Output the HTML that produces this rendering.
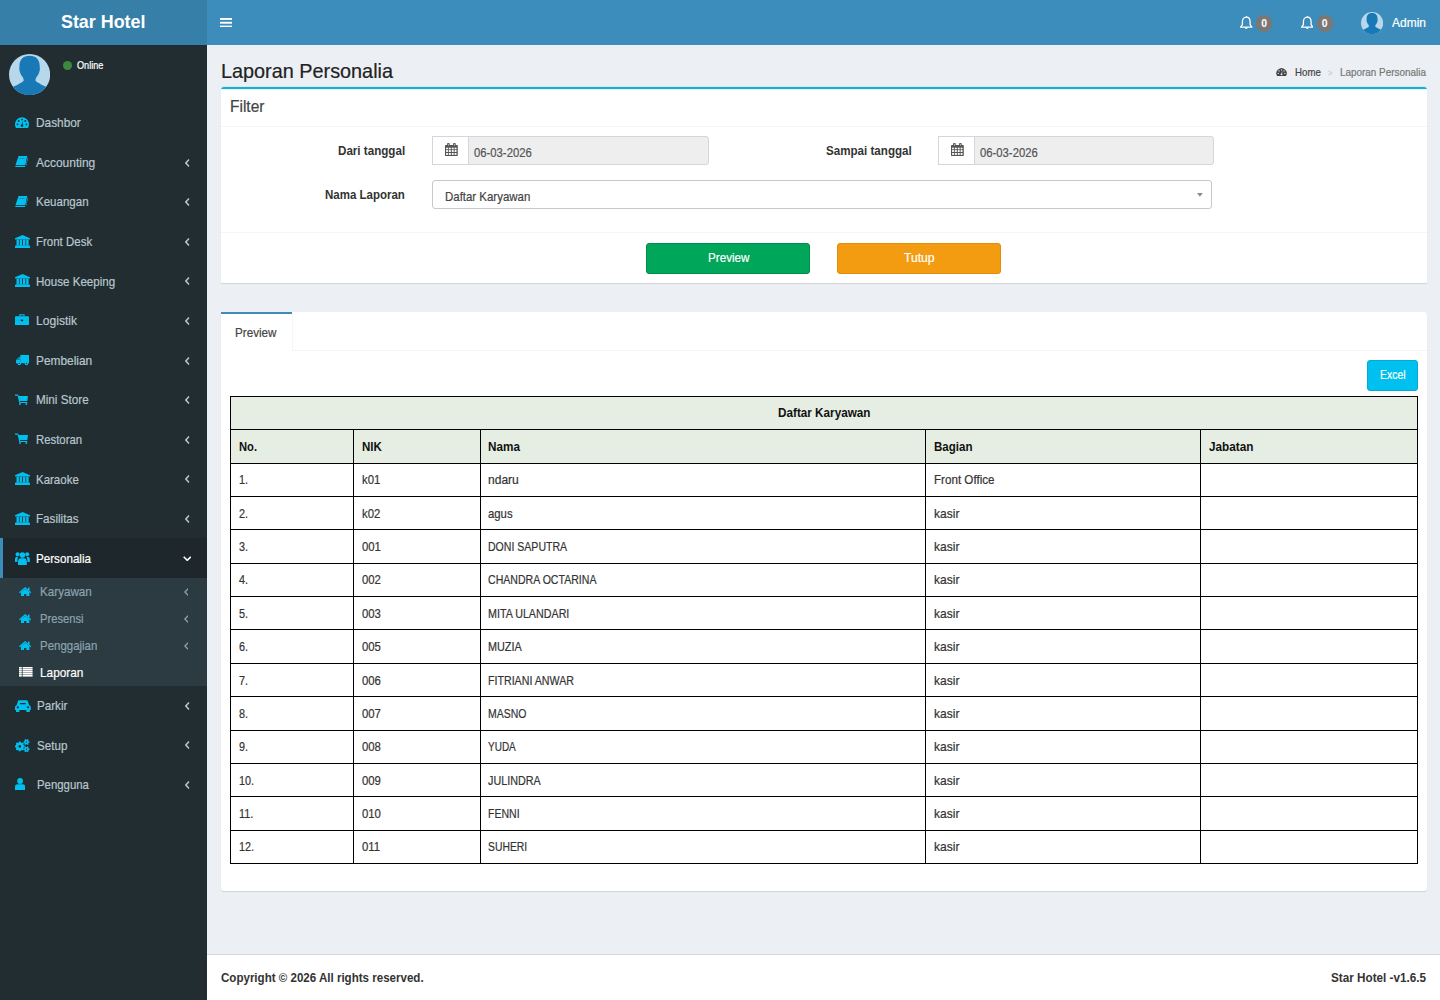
<!DOCTYPE html>
<html><head><meta charset="utf-8"><title>Laporan Personalia</title>
<style>
html,body{margin:0;padding:0;width:1440px;height:1000px;overflow:hidden;background:#ecf0f5;}
body{position:relative;font-family:"Liberation Sans",sans-serif;}
.r,.t,.i,.badge{position:absolute;}
.t{white-space:nowrap;line-height:1;transform-origin:0 0;-webkit-text-stroke:0.2px currentColor;}
.badge{width:16.2px;height:16.2px;border-radius:50%;background:#7a7774;}
.badge span{position:absolute;left:0;right:0;top:3.5px;text-align:center;font:bold 10.4px/1 "Liberation Sans",sans-serif;color:#fff;}
</style></head><body>
<div class="r" style="left:0px;top:0px;width:207px;height:45px;background:#367fa9;"></div>
<div class="r" style="left:207px;top:0px;width:1233px;height:45px;background:#3c8dbc;"></div>
<div class="t" style="left:61.30px;top:12.74px;font-size:18.84px;font-weight:bold;color:#fff;transform:scaleX(0.9492);-webkit-text-stroke:0;">Star Hotel</div>
<svg class="i" style="left:220px;top:17.5px;width:12px;height:9.5px;" viewBox="0 0 12 9.5"><rect x="0" y="0" width="12" height="1.9" fill="#fff"/><rect x="0" y="3.8" width="12" height="1.9" fill="#fff"/><rect x="0" y="7.6" width="12" height="1.9" fill="#fff"/></svg>
<svg class="i" style="left:1240.3px;top:15.8px;width:12.5px;height:13.3px;" viewBox="0 0 12.5 13.3"><path d="M6.25,1.2 C3.6,1.2 2.4,3.4 2.4,6 V8.6 L0.6,11.2 H11.9 L10.1,8.6 V6 C10.1,3.4 8.9,1.2 6.25,1.2Z" fill="none" stroke="#fff" stroke-width="1.3" stroke-linejoin="round"/><path d="M4.3,11.5 Q6.25,14.4 8.2,11.5Z" fill="#fff"/><rect x="5.8" y="0" width="0.9" height="1.5" fill="#fff"/></svg>
<div class="badge" style="left:1256px;top:15.4px;"><span>0</span></div>
<svg class="i" style="left:1300.7px;top:15.8px;width:12.5px;height:13.3px;" viewBox="0 0 12.5 13.3"><path d="M6.25,1.2 C3.6,1.2 2.4,3.4 2.4,6 V8.6 L0.6,11.2 H11.9 L10.1,8.6 V6 C10.1,3.4 8.9,1.2 6.25,1.2Z" fill="none" stroke="#fff" stroke-width="1.3" stroke-linejoin="round"/><path d="M4.3,11.5 Q6.25,14.4 8.2,11.5Z" fill="#fff"/><rect x="5.8" y="0" width="0.9" height="1.5" fill="#fff"/></svg>
<div class="badge" style="left:1316.6px;top:15.4px;"><span>0</span></div>
<svg class="i" style="left:1360.8px;top:11.6px;width:22.2px;height:22.2px;" viewBox="0 0 100 100"><defs><clipPath id="c1360_11"><circle cx="50" cy="50" r="50"/></clipPath></defs><circle cx="50" cy="50" r="50" fill="#b7d7ea"/><g clip-path="url(#c1360_11)"><path d="M50,4 C34,4 25.5,14 25.5,28 C25.5,33 24.5,36 25.5,40 C26.5,46 30,52 34,57 L36,64 C34,68 28,71 20,75 L4,82 L0,100 H100 L96,82 L80,75 C72,71 66,68 64,64 L66,57 C70,52 73.5,46 74.5,40 C75.5,36 74.5,33 74.5,28 C74.5,14 66,4 50,4Z" fill="#1879b6"/></g></svg>
<div class="t" style="left:1392.00px;top:16.93px;font-size:12.61px;font-weight:normal;color:#fff;transform:scaleX(0.9512);">Admin</div>
<div class="r" style="left:0px;top:45px;width:207px;height:955px;background:#222d32;"></div>
<svg class="i" style="left:8.8px;top:53.8px;width:41.2px;height:41.2px;" viewBox="0 0 100 100"><defs><clipPath id="c8_53"><circle cx="50" cy="50" r="50"/></clipPath></defs><circle cx="50" cy="50" r="50" fill="#b7d7ea"/><g clip-path="url(#c8_53)"><path d="M50,4 C34,4 25.5,14 25.5,28 C25.5,33 24.5,36 25.5,40 C26.5,46 30,52 34,57 L36,64 C34,68 28,71 20,75 L4,82 L0,100 H100 L96,82 L80,75 C72,71 66,68 64,64 L66,57 C70,52 73.5,46 74.5,40 C75.5,36 74.5,33 74.5,28 C74.5,14 66,4 50,4Z" fill="#1879b6"/></g></svg>
<div class="r" style="left:62.9px;top:60.9px;width:8.8px;height:8.8px;border-radius:50%;background:#3c883c"></div>
<div class="t" style="left:76.90px;top:61.00px;font-size:10.29px;font-weight:normal;color:#fff;transform:scaleX(0.8878);">Online</div>
<div class="t" style="left:36.20px;top:117.24px;font-size:12.60px;font-weight:normal;color:#b8c7ce;transform:scaleX(0.9406);">Dashbor</div>
<svg class="i" style="left:14.8px;top:117.0px;width:14px;height:11.25px;" viewBox="0 0 14 11.25"><path d="M1.2,11.25 A7,7 0 1,1 12.8,11.25 Z" fill="#00c0ef"/><circle cx="7" cy="2.6" r="0.9" fill="#222d32"/><circle cx="3.7" cy="4" r="0.9" fill="#222d32"/><circle cx="10.3" cy="4" r="0.9" fill="#222d32"/><circle cx="2.5" cy="7.3" r="0.9" fill="#222d32"/><circle cx="11.5" cy="7.3" r="0.9" fill="#222d32"/><circle cx="7" cy="8.6" r="1.3" fill="#222d32"/><path d="M6.6,8.5 L7.6,4.6 L8.2,4.8 L7.4,8.7Z" fill="#222d32"/></svg>
<div class="t" style="left:36.20px;top:156.84px;font-size:12.60px;font-weight:normal;color:#b8c7ce;transform:scaleX(0.9508);">Accounting</div>
<svg class="i" style="left:14.8px;top:156.0px;width:13px;height:11.4px;" viewBox="0 0 13 11.4"><path d="M3.6,0 H12.2 L10.3,9.3 H0.4 Z" fill="#00c0ef"/><path d="M0.3,9.9 H10.2 L9.9,11.4 H1.3 Q0.1,11.3 0.3,9.9 Z" fill="#00c0ef"/><path d="M12.5,1.6 H13 L11.4,9.6 H10.9 Z" fill="#00c0ef"/><rect x="5.2" y="1.9" width="5.4" height="1" fill="#1a8db3" transform="skewX(-20)"/></svg>
<svg class="i" style="left:185px;top:158.60000000000002px;width:4.6px;height:8px;" viewBox="0 0 4.6 8"><path d="M3.9999999999999996,0.6 L0.9,4.0 L3.9999999999999996,7.4" fill="none" stroke="#b8c7ce" stroke-width="1.5"/></svg>
<div class="t" style="left:36.20px;top:196.44px;font-size:12.60px;font-weight:normal;color:#b8c7ce;transform:scaleX(0.9155);">Keuangan</div>
<svg class="i" style="left:14.8px;top:195.6px;width:13px;height:11.4px;" viewBox="0 0 13 11.4"><path d="M3.6,0 H12.2 L10.3,9.3 H0.4 Z" fill="#00c0ef"/><path d="M0.3,9.9 H10.2 L9.9,11.4 H1.3 Q0.1,11.3 0.3,9.9 Z" fill="#00c0ef"/><path d="M12.5,1.6 H13 L11.4,9.6 H10.9 Z" fill="#00c0ef"/><rect x="5.2" y="1.9" width="5.4" height="1" fill="#1a8db3" transform="skewX(-20)"/></svg>
<svg class="i" style="left:185px;top:198.20000000000002px;width:4.6px;height:8px;" viewBox="0 0 4.6 8"><path d="M3.9999999999999996,0.6 L0.9,4.0 L3.9999999999999996,7.4" fill="none" stroke="#b8c7ce" stroke-width="1.5"/></svg>
<div class="t" style="left:36.20px;top:236.04px;font-size:12.60px;font-weight:normal;color:#b8c7ce;transform:scaleX(0.9112);">Front Desk</div>
<svg class="i" style="left:14.9px;top:234.6px;width:15.1px;height:13.2px;" viewBox="0 0 15.1 13.2"><path d="M7.55,0 L15.1,3.3 V4.6 H0 V3.3 Z" fill="#00c0ef"/><rect x="1.5" y="4.6" width="2.4" height="5.6" fill="#00c0ef"/><rect x="4.7" y="4.6" width="2.4" height="5.6" fill="#00c0ef"/><rect x="8" y="4.6" width="2.4" height="5.6" fill="#00c0ef"/><rect x="11.2" y="4.6" width="2.4" height="5.6" fill="#00c0ef"/><path d="M0.8,10.2 H14.3 L15.1,11.3 V13.2 H0 V11.3 Z" fill="#00c0ef"/></svg>
<svg class="i" style="left:185px;top:237.8px;width:4.6px;height:8px;" viewBox="0 0 4.6 8"><path d="M3.9999999999999996,0.6 L0.9,4.0 L3.9999999999999996,7.4" fill="none" stroke="#b8c7ce" stroke-width="1.5"/></svg>
<div class="t" style="left:36.20px;top:275.64px;font-size:12.60px;font-weight:normal;color:#b8c7ce;transform:scaleX(0.9190);">House Keeping</div>
<svg class="i" style="left:14.9px;top:274.20000000000005px;width:15.1px;height:13.2px;" viewBox="0 0 15.1 13.2"><path d="M7.55,0 L15.1,3.3 V4.6 H0 V3.3 Z" fill="#00c0ef"/><rect x="1.5" y="4.6" width="2.4" height="5.6" fill="#00c0ef"/><rect x="4.7" y="4.6" width="2.4" height="5.6" fill="#00c0ef"/><rect x="8" y="4.6" width="2.4" height="5.6" fill="#00c0ef"/><rect x="11.2" y="4.6" width="2.4" height="5.6" fill="#00c0ef"/><path d="M0.8,10.2 H14.3 L15.1,11.3 V13.2 H0 V11.3 Z" fill="#00c0ef"/></svg>
<svg class="i" style="left:185px;top:277.40000000000003px;width:4.6px;height:8px;" viewBox="0 0 4.6 8"><path d="M3.9999999999999996,0.6 L0.9,4.0 L3.9999999999999996,7.4" fill="none" stroke="#b8c7ce" stroke-width="1.5"/></svg>
<div class="t" style="left:36.20px;top:315.24px;font-size:12.60px;font-weight:normal;color:#b8c7ce;transform:scaleX(0.9608);">Logistik</div>
<svg class="i" style="left:14.9px;top:313.7px;width:14px;height:11.3px;" viewBox="0 0 14 11.3"><path d="M4.3,0.3 H9.6 V2.2 H8.4 V1.3 H5.5 V2.2 H4.3Z" fill="#00c0ef"/><rect x="0" y="2.2" width="14" height="9.1" rx="0.8" fill="#00c0ef"/><path d="M0,6.2 H14" stroke="#1a9cc4" stroke-width="0.6"/><rect x="5.8" y="5.6" width="2.4" height="1.6" rx="0.6" fill="#222d32"/></svg>
<svg class="i" style="left:185px;top:317.0px;width:4.6px;height:8px;" viewBox="0 0 4.6 8"><path d="M3.9999999999999996,0.6 L0.9,4.0 L3.9999999999999996,7.4" fill="none" stroke="#b8c7ce" stroke-width="1.5"/></svg>
<div class="t" style="left:36.20px;top:354.84px;font-size:12.60px;font-weight:normal;color:#b8c7ce;transform:scaleX(0.9440);">Pembelian</div>
<svg class="i" style="left:15.8px;top:355.40000000000003px;width:13.1px;height:10.3px;" viewBox="0 0 13.1 10.3"><rect x="4.3" y="0" width="8.8" height="8.2" fill="#00c0ef"/><path d="M0,5.2 L2.5,2.2 H4.5 V8.2 H0Z" fill="#00c0ef"/><path d="M1.8,3.6 H3.6 V4.6 H1.2Z" fill="#222d32"/><circle cx="3.3" cy="8.4" r="1.8" fill="#00c0ef"/><circle cx="10.5" cy="8.4" r="1.8" fill="#00c0ef"/><circle cx="3.3" cy="8.4" r="0.6" fill="#222d32"/><circle cx="10.5" cy="8.4" r="0.6" fill="#222d32"/></svg>
<svg class="i" style="left:185px;top:356.6px;width:4.6px;height:8px;" viewBox="0 0 4.6 8"><path d="M3.9999999999999996,0.6 L0.9,4.0 L3.9999999999999996,7.4" fill="none" stroke="#b8c7ce" stroke-width="1.5"/></svg>
<div class="t" style="left:36.20px;top:394.44px;font-size:12.60px;font-weight:normal;color:#b8c7ce;transform:scaleX(0.9295);">Mini Store</div>
<svg class="i" style="left:14.9px;top:393.79999999999995px;width:13px;height:11px;" viewBox="0 0 13 11"><path d="M0,0.6 H3 L3.8,2 H13 L12.3,7 H4.8 L5.2,8 H12.3 V9 H4.4 L2.6,1.8 H0Z" fill="#00c0ef"/><circle cx="5" cy="10" r="0.95" fill="#00c0ef"/><circle cx="11.3" cy="10" r="0.95" fill="#00c0ef"/></svg>
<svg class="i" style="left:185px;top:396.2px;width:4.6px;height:8px;" viewBox="0 0 4.6 8"><path d="M3.9999999999999996,0.6 L0.9,4.0 L3.9999999999999996,7.4" fill="none" stroke="#b8c7ce" stroke-width="1.5"/></svg>
<div class="t" style="left:36.20px;top:434.04px;font-size:12.60px;font-weight:normal;color:#b8c7ce;transform:scaleX(0.9012);">Restoran</div>
<svg class="i" style="left:14.9px;top:433.4px;width:13px;height:11px;" viewBox="0 0 13 11"><path d="M0,0.6 H3 L3.8,2 H13 L12.3,7 H4.8 L5.2,8 H12.3 V9 H4.4 L2.6,1.8 H0Z" fill="#00c0ef"/><circle cx="5" cy="10" r="0.95" fill="#00c0ef"/><circle cx="11.3" cy="10" r="0.95" fill="#00c0ef"/></svg>
<svg class="i" style="left:185px;top:435.8px;width:4.6px;height:8px;" viewBox="0 0 4.6 8"><path d="M3.9999999999999996,0.6 L0.9,4.0 L3.9999999999999996,7.4" fill="none" stroke="#b8c7ce" stroke-width="1.5"/></svg>
<div class="t" style="left:36.20px;top:473.64px;font-size:12.60px;font-weight:normal;color:#b8c7ce;transform:scaleX(0.9119);">Karaoke</div>
<svg class="i" style="left:14.9px;top:472.20000000000005px;width:15.1px;height:13.2px;" viewBox="0 0 15.1 13.2"><path d="M7.55,0 L15.1,3.3 V4.6 H0 V3.3 Z" fill="#00c0ef"/><rect x="1.5" y="4.6" width="2.4" height="5.6" fill="#00c0ef"/><rect x="4.7" y="4.6" width="2.4" height="5.6" fill="#00c0ef"/><rect x="8" y="4.6" width="2.4" height="5.6" fill="#00c0ef"/><rect x="11.2" y="4.6" width="2.4" height="5.6" fill="#00c0ef"/><path d="M0.8,10.2 H14.3 L15.1,11.3 V13.2 H0 V11.3 Z" fill="#00c0ef"/></svg>
<svg class="i" style="left:185px;top:475.40000000000003px;width:4.6px;height:8px;" viewBox="0 0 4.6 8"><path d="M3.9999999999999996,0.6 L0.9,4.0 L3.9999999999999996,7.4" fill="none" stroke="#b8c7ce" stroke-width="1.5"/></svg>
<div class="t" style="left:36.20px;top:513.24px;font-size:12.60px;font-weight:normal;color:#b8c7ce;transform:scaleX(0.9234);">Fasilitas</div>
<svg class="i" style="left:14.9px;top:511.80000000000007px;width:15.1px;height:13.2px;" viewBox="0 0 15.1 13.2"><path d="M7.55,0 L15.1,3.3 V4.6 H0 V3.3 Z" fill="#00c0ef"/><rect x="1.5" y="4.6" width="2.4" height="5.6" fill="#00c0ef"/><rect x="4.7" y="4.6" width="2.4" height="5.6" fill="#00c0ef"/><rect x="8" y="4.6" width="2.4" height="5.6" fill="#00c0ef"/><rect x="11.2" y="4.6" width="2.4" height="5.6" fill="#00c0ef"/><path d="M0.8,10.2 H14.3 L15.1,11.3 V13.2 H0 V11.3 Z" fill="#00c0ef"/></svg>
<svg class="i" style="left:185px;top:515.0px;width:4.6px;height:8px;" viewBox="0 0 4.6 8"><path d="M3.9999999999999996,0.6 L0.9,4.0 L3.9999999999999996,7.4" fill="none" stroke="#b8c7ce" stroke-width="1.5"/></svg>
<div class="r" style="left:0px;top:538px;width:207px;height:40px;background:#1e282c;"></div>
<div class="r" style="left:0px;top:538px;width:2.7px;height:40px;background:#3c8dbc;"></div>
<div class="t" style="left:36.20px;top:552.84px;font-size:12.60px;font-weight:normal;color:#fff;transform:scaleX(0.9245);">Personalia</div>
<svg class="i" style="left:15px;top:551.6px;width:14.8px;height:13.1px;" viewBox="0 0 14.8 13.1"><circle cx="7.4" cy="3" r="2.8" fill="#00c0ef"/><circle cx="2.6" cy="2.3" r="2" fill="#00c0ef"/><circle cx="12.2" cy="2.3" r="2" fill="#00c0ef"/><path d="M3,13.1 V9.6 Q3,6.6 5.6,6.3 H9.2 Q11.8,6.6 11.8,9.6 V13.1Z" fill="#00c0ef"/><path d="M0,10 V7 Q0,4.8 2,4.8 H3.4 Q2.4,6 2.4,8.8 V10Z" fill="#00c0ef"/><path d="M14.8,10 V7 Q14.8,4.8 12.8,4.8 H11.4 Q12.4,6 12.4,8.8 V10Z" fill="#00c0ef"/></svg>
<svg class="i" style="left:182.8px;top:555.5px;width:8.5px;height:5.1px;" viewBox="0 0 8.5 5.1"><path d="M0.7,0.7 L4.25,4.3 L7.8,0.7" fill="none" stroke="#fff" stroke-width="1.6"/></svg>
<div class="r" style="left:0px;top:578px;width:207px;height:108px;background:#2c3b41;"></div>
<div class="t" style="left:40.00px;top:586.04px;font-size:12.60px;font-weight:normal;color:#8aa4af;transform:scaleX(0.9249);">Karyawan</div>
<svg class="i" style="left:18.7px;top:586.5px;width:12.4px;height:9.8px;" viewBox="0 0 12.4 9.8"><path d="M6.2,0 L12.4,5.3 L11.5,6.2 L6.2,1.8 L0.9,6.2 L0,5.3Z" fill="#00c0ef"/><path d="M2,5.3 L6.2,1.9 L10.4,5.3 V9.8 H7.4 V6.9 H5 V9.8 H2Z" fill="#00c0ef"/><rect x="9" y="0.6" width="1.6" height="2.8" fill="#00c0ef"/></svg>
<svg class="i" style="left:183.7px;top:588px;width:4.7px;height:8px;" viewBox="0 0 4.7 8"><path d="M4.1000000000000005,0.6 L0.9,4.0 L4.1000000000000005,7.4" fill="none" stroke="#8aa4af" stroke-width="1.3"/></svg>
<div class="t" style="left:40.00px;top:613.04px;font-size:12.60px;font-weight:normal;color:#8aa4af;transform:scaleX(0.8895);">Presensi</div>
<svg class="i" style="left:18.7px;top:613.5px;width:12.4px;height:9.8px;" viewBox="0 0 12.4 9.8"><path d="M6.2,0 L12.4,5.3 L11.5,6.2 L6.2,1.8 L0.9,6.2 L0,5.3Z" fill="#00c0ef"/><path d="M2,5.3 L6.2,1.9 L10.4,5.3 V9.8 H7.4 V6.9 H5 V9.8 H2Z" fill="#00c0ef"/><rect x="9" y="0.6" width="1.6" height="2.8" fill="#00c0ef"/></svg>
<svg class="i" style="left:183.7px;top:615px;width:4.7px;height:8px;" viewBox="0 0 4.7 8"><path d="M4.1000000000000005,0.6 L0.9,4.0 L4.1000000000000005,7.4" fill="none" stroke="#8aa4af" stroke-width="1.3"/></svg>
<div class="t" style="left:40.00px;top:640.04px;font-size:12.60px;font-weight:normal;color:#8aa4af;transform:scaleX(0.9102);">Penggajian</div>
<svg class="i" style="left:18.7px;top:640.5px;width:12.4px;height:9.8px;" viewBox="0 0 12.4 9.8"><path d="M6.2,0 L12.4,5.3 L11.5,6.2 L6.2,1.8 L0.9,6.2 L0,5.3Z" fill="#00c0ef"/><path d="M2,5.3 L6.2,1.9 L10.4,5.3 V9.8 H7.4 V6.9 H5 V9.8 H2Z" fill="#00c0ef"/><rect x="9" y="0.6" width="1.6" height="2.8" fill="#00c0ef"/></svg>
<svg class="i" style="left:183.7px;top:642px;width:4.7px;height:8px;" viewBox="0 0 4.7 8"><path d="M4.1000000000000005,0.6 L0.9,4.0 L4.1000000000000005,7.4" fill="none" stroke="#8aa4af" stroke-width="1.3"/></svg>
<div class="t" style="left:40.00px;top:667.04px;font-size:12.60px;font-weight:normal;color:#fff;transform:scaleX(0.9385);">Laporan</div>
<svg class="i" style="left:19px;top:667.2px;width:13.6px;height:9.6px;" viewBox="0 0 13.6 9.6"><rect x="0" y="0" width="2.8" height="1.6" fill="#fff"/><rect x="3.6" y="0" width="10" height="1.6" fill="#fff"/><rect x="0" y="2" width="2.8" height="1.6" fill="#fff"/><rect x="3.6" y="2" width="10" height="1.6" fill="#fff"/><rect x="0" y="4" width="2.8" height="1.6" fill="#fff"/><rect x="3.6" y="4" width="10" height="1.6" fill="#fff"/><rect x="0" y="6" width="2.8" height="1.6" fill="#fff"/><rect x="3.6" y="6" width="10" height="1.6" fill="#fff"/><rect x="0" y="8" width="2.8" height="1.6" fill="#fff"/><rect x="3.6" y="8" width="10" height="1.6" fill="#fff"/></svg>
<div class="t" style="left:36.60px;top:700.04px;font-size:12.60px;font-weight:normal;color:#b8c7ce;transform:scaleX(0.9244);">Parkir</div>
<svg class="i" style="left:14.8px;top:699.5px;width:15.8px;height:12.4px;" viewBox="0 0 15.8 12.4"><path d="M3.3,0.3 H12.4 L14.2,5.2 Q15.8,5.6 15.8,7.5 V10 H0 V7.5 Q0,5.6 1.6,5.2Z" fill="#00c0ef"/><path d="M5,2.9 H10.6 L11,4.2 H4.7Z" fill="#222d32"/><circle cx="2.8" cy="7.3" r="1.1" fill="#222d32"/><circle cx="13" cy="7.3" r="1.1" fill="#222d32"/><rect x="1" y="9.5" width="3.4" height="2.9" rx="1" fill="#00c0ef"/><rect x="11.4" y="9.5" width="3.4" height="2.9" rx="1" fill="#00c0ef"/></svg>
<svg class="i" style="left:185px;top:701.8px;width:4.6px;height:8px;" viewBox="0 0 4.6 8"><path d="M3.9999999999999996,0.6 L0.9,4.0 L3.9999999999999996,7.4" fill="none" stroke="#b8c7ce" stroke-width="1.5"/></svg>
<div class="t" style="left:36.60px;top:739.64px;font-size:12.60px;font-weight:normal;color:#b8c7ce;transform:scaleX(0.9226);">Setup</div>
<svg class="i" style="left:14.9px;top:738.7px;width:15px;height:13px;" viewBox="0 0 15 13"><circle cx="4.8" cy="7.4" r="3.9" fill="#00c0ef"/><rect x="7.75" y="6.45" width="1.9" height="1.9" fill="#00c0ef" transform="rotate(0.0 8.70 7.40)"/><rect x="6.61" y="9.21" width="1.9" height="1.9" fill="#00c0ef" transform="rotate(45.0 7.56 10.16)"/><rect x="3.85" y="10.35" width="1.9" height="1.9" fill="#00c0ef" transform="rotate(90.0 4.80 11.30)"/><rect x="1.09" y="9.21" width="1.9" height="1.9" fill="#00c0ef" transform="rotate(135.0 2.04 10.16)"/><rect x="-0.05" y="6.45" width="1.9" height="1.9" fill="#00c0ef" transform="rotate(180.0 0.90 7.40)"/><rect x="1.09" y="3.69" width="1.9" height="1.9" fill="#00c0ef" transform="rotate(225.0 2.04 4.64)"/><rect x="3.85" y="2.55" width="1.9" height="1.9" fill="#00c0ef" transform="rotate(270.0 4.80 3.50)"/><rect x="6.61" y="3.69" width="1.9" height="1.9" fill="#00c0ef" transform="rotate(315.0 7.56 4.64)"/><circle cx="4.8" cy="7.4" r="1.3" fill="#222d32"/><circle cx="11.5" cy="3" r="2.3" fill="#00c0ef"/><rect x="13.10" y="2.30" width="1.4" height="1.4" fill="#00c0ef" transform="rotate(0.0 13.80 3.00)"/><rect x="11.95" y="4.29" width="1.4" height="1.4" fill="#00c0ef" transform="rotate(60.0 12.65 4.99)"/><rect x="9.65" y="4.29" width="1.4" height="1.4" fill="#00c0ef" transform="rotate(120.0 10.35 4.99)"/><rect x="8.50" y="2.30" width="1.4" height="1.4" fill="#00c0ef" transform="rotate(180.0 9.20 3.00)"/><rect x="9.65" y="0.31" width="1.4" height="1.4" fill="#00c0ef" transform="rotate(240.0 10.35 1.01)"/><rect x="11.95" y="0.31" width="1.4" height="1.4" fill="#00c0ef" transform="rotate(300.0 12.65 1.01)"/><circle cx="11.5" cy="3" r="0.7" fill="#222d32"/><circle cx="11.5" cy="10.3" r="2.3" fill="#00c0ef"/><rect x="13.10" y="9.60" width="1.4" height="1.4" fill="#00c0ef" transform="rotate(0.0 13.80 10.30)"/><rect x="11.95" y="11.59" width="1.4" height="1.4" fill="#00c0ef" transform="rotate(60.0 12.65 12.29)"/><rect x="9.65" y="11.59" width="1.4" height="1.4" fill="#00c0ef" transform="rotate(120.0 10.35 12.29)"/><rect x="8.50" y="9.60" width="1.4" height="1.4" fill="#00c0ef" transform="rotate(180.0 9.20 10.30)"/><rect x="9.65" y="7.61" width="1.4" height="1.4" fill="#00c0ef" transform="rotate(240.0 10.35 8.31)"/><rect x="11.95" y="7.61" width="1.4" height="1.4" fill="#00c0ef" transform="rotate(300.0 12.65 8.31)"/><circle cx="11.5" cy="10.3" r="0.7" fill="#222d32"/></svg>
<svg class="i" style="left:185px;top:741.4px;width:4.6px;height:8px;" viewBox="0 0 4.6 8"><path d="M3.9999999999999996,0.6 L0.9,4.0 L3.9999999999999996,7.4" fill="none" stroke="#b8c7ce" stroke-width="1.5"/></svg>
<div class="t" style="left:36.60px;top:779.24px;font-size:12.60px;font-weight:normal;color:#b8c7ce;transform:scaleX(0.9040);">Pengguna</div>
<svg class="i" style="left:14.8px;top:778.1px;width:10.2px;height:11.9px;" viewBox="0 0 10.2 11.9"><circle cx="5.1" cy="3" r="2.9" fill="#00c0ef"/><path d="M0,11.9 V9 Q0,6.3 2.6,6.3 H7.6 Q10.2,6.3 10.2,9 V11.9Z" fill="#00c0ef"/></svg>
<svg class="i" style="left:185px;top:781.0px;width:4.6px;height:8px;" viewBox="0 0 4.6 8"><path d="M3.9999999999999996,0.6 L0.9,4.0 L3.9999999999999996,7.4" fill="none" stroke="#b8c7ce" stroke-width="1.5"/></svg>
<div class="r" style="left:207px;top:45px;width:1233px;height:909px;background:#ecf0f5;"></div>
<div class="t" style="left:221.30px;top:61.43px;font-size:20.14px;font-weight:normal;color:#222;transform:scaleX(0.9854);">Laporan Personalia</div>
<svg class="i" style="left:1276.1px;top:68.1px;width:11.1px;height:8.3px;" viewBox="0 0 14 11.25"><path d="M1.2,11.25 A7,7 0 1,1 12.8,11.25 Z" fill="#444"/><circle cx="7" cy="2.6" r="0.9" fill="#ecf0f5"/><circle cx="3.7" cy="4" r="0.9" fill="#ecf0f5"/><circle cx="10.3" cy="4" r="0.9" fill="#ecf0f5"/><circle cx="2.5" cy="7.3" r="0.9" fill="#ecf0f5"/><circle cx="11.5" cy="7.3" r="0.9" fill="#ecf0f5"/><circle cx="7" cy="8.6" r="1.3" fill="#ecf0f5"/><path d="M6.6,8.5 L7.6,4.6 L8.2,4.8 L7.4,8.7Z" fill="#ecf0f5"/></svg>
<div class="t" style="left:1294.70px;top:68.03px;font-size:10.14px;font-weight:normal;color:#444;transform:scaleX(0.9562);">Home</div>
<div class="t" style="left:1328.30px;top:68.86px;font-size:8.70px;font-weight:normal;color:#ccc;transform:scaleX(0.8846);">&gt;</div>
<div class="t" style="left:1340.00px;top:68.03px;font-size:10.14px;font-weight:normal;color:#777;transform:scaleX(0.9783);">Laporan Personalia</div>
<div class="r" style="left:221px;top:87px;width:1206px;height:194px;background:#fff;border-top:2px solid #32a4c3;border-radius:3px 3px 0 0;box-shadow:0 1px 1px rgba(0,0,0,0.12)"></div>
<div class="r" style="left:222px;top:86px;width:1204px;height:1px;background:#b4fbff;"></div>
<div class="r" style="left:221px;top:89px;width:1206px;height:1px;background:#d2fdff;"></div>
<div class="t" style="left:230.30px;top:99.25px;font-size:15.65px;font-weight:normal;color:#444;transform:scaleX(0.9900);">Filter</div>
<div class="r" style="left:221px;top:126px;width:1206px;height:1px;background:#f4f4f4;"></div>
<div class="t" style="left:337.80px;top:144.86px;font-size:12.46px;font-weight:bold;color:#333;transform:scaleX(0.9328);-webkit-text-stroke:0;">Dari tanggal</div>
<div class="t" style="left:825.80px;top:144.86px;font-size:12.46px;font-weight:bold;color:#333;transform:scaleX(0.9315);-webkit-text-stroke:0;">Sampai tanggal</div>
<div class="t" style="left:325.00px;top:189.30px;font-size:12.17px;font-weight:bold;color:#333;transform:scaleX(0.9462);-webkit-text-stroke:0;">Nama Laporan</div>
<div class="r" style="left:432.2px;top:136.3px;width:276.50000000000006px;height:29.2px;box-sizing:border-box;border:1px solid #d2d6de;border-radius:0 3px 3px 0;background:#eee"></div>
<div class="r" style="left:432.2px;top:136.3px;width:37.2px;height:29.2px;box-sizing:border-box;border:1px solid #d2d6de;background:#fff"></div>
<svg class="i" style="left:445.0px;top:142.9px;width:12.8px;height:12.9px;" viewBox="0 0 12.8 12.9"><rect x="0" y="1.9" width="12.8" height="11" rx="0.6" fill="#555"/><rect x="1.1" y="4.7" width="1.80" height="1.60" fill="#fff"/><rect x="1.1" y="7.1" width="1.80" height="1.90" fill="#fff"/><rect x="1.1" y="10.0" width="1.80" height="1.90" fill="#fff"/><rect x="3.8" y="4.7" width="2.00" height="1.60" fill="#fff"/><rect x="3.8" y="7.1" width="2.00" height="1.90" fill="#fff"/><rect x="3.8" y="10.0" width="2.00" height="1.90" fill="#fff"/><rect x="6.8" y="4.7" width="1.90" height="1.60" fill="#fff"/><rect x="6.8" y="7.1" width="1.90" height="1.90" fill="#fff"/><rect x="6.8" y="10.0" width="1.90" height="1.90" fill="#fff"/><rect x="9.6" y="4.7" width="1.90" height="1.60" fill="#fff"/><rect x="9.6" y="7.1" width="1.90" height="1.90" fill="#fff"/><rect x="9.6" y="10.0" width="1.90" height="1.90" fill="#fff"/><rect x="2.1" y="0" width="2.6" height="3.4" rx="0.8" fill="#555"/><rect x="8.1" y="0" width="2.6" height="3.4" rx="0.8" fill="#555"/><rect x="3.1" y="0.9" width="0.6" height="1.8" fill="#ddd"/><rect x="9.1" y="0.9" width="0.6" height="1.8" fill="#ddd"/></svg>
<div class="t" style="left:473.50px;top:146.58px;font-size:12.20px;font-weight:normal;color:#555;transform:scaleX(0.9262);">06-03-2026</div>
<div class="r" style="left:938.3px;top:136.3px;width:276.20000000000005px;height:29.2px;box-sizing:border-box;border:1px solid #d2d6de;border-radius:0 3px 3px 0;background:#eee"></div>
<div class="r" style="left:938.3px;top:136.3px;width:37.2px;height:29.2px;box-sizing:border-box;border:1px solid #d2d6de;background:#fff"></div>
<svg class="i" style="left:951.0999999999999px;top:142.9px;width:12.8px;height:12.9px;" viewBox="0 0 12.8 12.9"><rect x="0" y="1.9" width="12.8" height="11" rx="0.6" fill="#555"/><rect x="1.1" y="4.7" width="1.80" height="1.60" fill="#fff"/><rect x="1.1" y="7.1" width="1.80" height="1.90" fill="#fff"/><rect x="1.1" y="10.0" width="1.80" height="1.90" fill="#fff"/><rect x="3.8" y="4.7" width="2.00" height="1.60" fill="#fff"/><rect x="3.8" y="7.1" width="2.00" height="1.90" fill="#fff"/><rect x="3.8" y="10.0" width="2.00" height="1.90" fill="#fff"/><rect x="6.8" y="4.7" width="1.90" height="1.60" fill="#fff"/><rect x="6.8" y="7.1" width="1.90" height="1.90" fill="#fff"/><rect x="6.8" y="10.0" width="1.90" height="1.90" fill="#fff"/><rect x="9.6" y="4.7" width="1.90" height="1.60" fill="#fff"/><rect x="9.6" y="7.1" width="1.90" height="1.90" fill="#fff"/><rect x="9.6" y="10.0" width="1.90" height="1.90" fill="#fff"/><rect x="2.1" y="0" width="2.6" height="3.4" rx="0.8" fill="#555"/><rect x="8.1" y="0" width="2.6" height="3.4" rx="0.8" fill="#555"/><rect x="3.1" y="0.9" width="0.6" height="1.8" fill="#ddd"/><rect x="9.1" y="0.9" width="0.6" height="1.8" fill="#ddd"/></svg>
<div class="t" style="left:979.60px;top:146.58px;font-size:12.20px;font-weight:normal;color:#555;transform:scaleX(0.9262);">06-03-2026</div>
<div class="r" style="left:432.2px;top:180.3px;width:779.4px;height:29.2px;box-sizing:border-box;border:1px solid #c8c8c8;border-radius:3px;background:#fff"></div>
<div class="t" style="left:445.00px;top:190.53px;font-size:12.03px;font-weight:normal;color:#444;transform:scaleX(0.9530);">Daftar Karyawan</div>
<svg class="i" style="left:1197px;top:193px;width:5.8px;height:3.8px" viewBox="0 0 6 4"><path d="M0,0 H6 L3,4Z" fill="#888"/></svg>
<div class="r" style="left:221px;top:232px;width:1206px;height:1px;background:#f4f4f4;"></div>
<div class="r" style="left:646.3px;top:243px;width:163.4px;height:30.7px;box-sizing:border-box;background:#00a65a;border:1px solid #008d4c;border-radius:3px"></div>
<div class="t" style="left:707.70px;top:251.81px;font-size:12.75px;font-weight:normal;color:#fff;transform:scaleX(0.9140);">Preview</div>
<div class="r" style="left:837.3px;top:243px;width:163.4px;height:30.7px;box-sizing:border-box;background:#f39c12;border:1px solid #e08e0b;border-radius:3px"></div>
<div class="t" style="left:904.30px;top:251.81px;font-size:12.75px;font-weight:normal;color:#fff;transform:scaleX(0.9521);">Tutup</div>
<div class="r" style="left:221px;top:312px;width:1206px;height:579px;background:#fff;border-radius:3px;box-shadow:0 1px 1px rgba(0,0,0,0.12)"></div>
<div class="r" style="left:221px;top:312px;width:71px;height:2.3px;background:#3c8dbc;"></div>
<div class="r" style="left:292px;top:350px;width:1135px;height:1px;background:#f4f4f4;"></div>
<div class="r" style="left:292px;top:314px;width:1px;height:36px;background:#f6f6f6;"></div>
<div class="t" style="left:235.40px;top:326.61px;font-size:12.75px;font-weight:normal;color:#444;transform:scaleX(0.9162);">Preview</div>
<div class="r" style="left:1367px;top:360px;width:50.8px;height:30.8px;background:#00c0ef;border-radius:3px;box-sizing:border-box;border:1px solid #00acd6"></div>
<div class="t" style="left:1380.00px;top:368.78px;font-size:12.32px;font-weight:normal;color:#fff;transform:scaleX(0.8466);">Excel</div>
<div class="r" style="left:231px;top:397px;width:1186px;height:66px;background:#e6eee3;"></div>
<div class="r" style="left:230px;top:396px;width:1188px;height:1px;background:#000;"></div>
<div class="r" style="left:230px;top:429px;width:1188px;height:1px;background:#000;"></div>
<div class="r" style="left:230px;top:463px;width:1188px;height:1px;background:#000;"></div>
<div class="r" style="left:230px;top:496px;width:1188px;height:1px;background:#000;"></div>
<div class="r" style="left:230px;top:529px;width:1188px;height:1px;background:#000;"></div>
<div class="r" style="left:230px;top:563px;width:1188px;height:1px;background:#000;"></div>
<div class="r" style="left:230px;top:596px;width:1188px;height:1px;background:#000;"></div>
<div class="r" style="left:230px;top:629px;width:1188px;height:1px;background:#000;"></div>
<div class="r" style="left:230px;top:663px;width:1188px;height:1px;background:#000;"></div>
<div class="r" style="left:230px;top:696px;width:1188px;height:1px;background:#000;"></div>
<div class="r" style="left:230px;top:730px;width:1188px;height:1px;background:#000;"></div>
<div class="r" style="left:230px;top:763px;width:1188px;height:1px;background:#000;"></div>
<div class="r" style="left:230px;top:796px;width:1188px;height:1px;background:#000;"></div>
<div class="r" style="left:230px;top:830px;width:1188px;height:1px;background:#000;"></div>
<div class="r" style="left:230px;top:863px;width:1188px;height:1px;background:#000;"></div>
<div class="r" style="left:230px;top:396px;width:1px;height:468px;background:#000;"></div>
<div class="r" style="left:1417px;top:396px;width:1px;height:468px;background:#000;"></div>
<div class="r" style="left:353px;top:429px;width:1px;height:435px;background:#000;"></div>
<div class="r" style="left:480px;top:429px;width:1px;height:435px;background:#000;"></div>
<div class="r" style="left:925px;top:429px;width:1px;height:435px;background:#000;"></div>
<div class="r" style="left:1200px;top:429px;width:1px;height:435px;background:#000;"></div>
<div class="t" style="left:777.60px;top:406.79px;font-size:12.90px;font-weight:bold;color:#111;transform:scaleX(0.9089);-webkit-text-stroke:0;">Daftar Karyawan</div>
<div class="t" style="left:238.50px;top:440.26px;font-size:13.04px;font-weight:bold;color:#111;transform:scaleX(0.8571);-webkit-text-stroke:0;">No.</div>
<div class="t" style="left:361.90px;top:440.26px;font-size:13.04px;font-weight:bold;color:#111;transform:scaleX(0.8826);-webkit-text-stroke:0;">NIK</div>
<div class="t" style="left:488.40px;top:440.26px;font-size:13.04px;font-weight:bold;color:#111;transform:scaleX(0.8998);-webkit-text-stroke:0;">Nama</div>
<div class="t" style="left:933.50px;top:440.26px;font-size:13.04px;font-weight:bold;color:#111;transform:scaleX(0.8851);-webkit-text-stroke:0;">Bagian</div>
<div class="t" style="left:1208.50px;top:440.26px;font-size:13.04px;font-weight:bold;color:#111;transform:scaleX(0.9026);-webkit-text-stroke:0;">Jabatan</div>
<div class="t" style="left:238.50px;top:474.44px;font-size:12.60px;font-weight:normal;color:#333;transform:scaleX(0.8600);">1.</div>
<div class="t" style="left:361.90px;top:474.44px;font-size:12.60px;font-weight:normal;color:#333;transform:scaleX(0.9000);">k01</div>
<div class="t" style="left:488.40px;top:474.44px;font-size:12.60px;font-weight:normal;color:#333;transform:scaleX(0.9549);">ndaru</div>
<div class="t" style="left:933.50px;top:474.44px;font-size:12.60px;font-weight:normal;color:#333;transform:scaleX(0.9225);">Front Office</div>
<div class="t" style="left:238.50px;top:507.79px;font-size:12.60px;font-weight:normal;color:#333;transform:scaleX(0.8600);">2.</div>
<div class="t" style="left:361.90px;top:507.79px;font-size:12.60px;font-weight:normal;color:#333;transform:scaleX(0.9000);">k02</div>
<div class="t" style="left:488.40px;top:507.79px;font-size:12.60px;font-weight:normal;color:#333;transform:scaleX(0.8997);">agus</div>
<div class="t" style="left:933.50px;top:507.79px;font-size:12.60px;font-weight:normal;color:#333;transform:scaleX(0.9554);">kasir</div>
<div class="t" style="left:238.50px;top:541.14px;font-size:12.60px;font-weight:normal;color:#333;transform:scaleX(0.8600);">3.</div>
<div class="t" style="left:361.90px;top:541.14px;font-size:12.60px;font-weight:normal;color:#333;transform:scaleX(0.9000);">001</div>
<div class="t" style="left:488.40px;top:541.14px;font-size:12.60px;font-weight:normal;color:#333;transform:scaleX(0.8375);">DONI SAPUTRA</div>
<div class="t" style="left:933.50px;top:541.14px;font-size:12.60px;font-weight:normal;color:#333;transform:scaleX(0.9554);">kasir</div>
<div class="t" style="left:238.50px;top:574.49px;font-size:12.60px;font-weight:normal;color:#333;transform:scaleX(0.8600);">4.</div>
<div class="t" style="left:361.90px;top:574.49px;font-size:12.60px;font-weight:normal;color:#333;transform:scaleX(0.9000);">002</div>
<div class="t" style="left:488.40px;top:574.49px;font-size:12.60px;font-weight:normal;color:#333;transform:scaleX(0.8397);">CHANDRA OCTARINA</div>
<div class="t" style="left:933.50px;top:574.49px;font-size:12.60px;font-weight:normal;color:#333;transform:scaleX(0.9554);">kasir</div>
<div class="t" style="left:238.50px;top:607.84px;font-size:12.60px;font-weight:normal;color:#333;transform:scaleX(0.8600);">5.</div>
<div class="t" style="left:361.90px;top:607.84px;font-size:12.60px;font-weight:normal;color:#333;transform:scaleX(0.9000);">003</div>
<div class="t" style="left:488.40px;top:607.84px;font-size:12.60px;font-weight:normal;color:#333;transform:scaleX(0.8506);">MITA ULANDARI</div>
<div class="t" style="left:933.50px;top:607.84px;font-size:12.60px;font-weight:normal;color:#333;transform:scaleX(0.9554);">kasir</div>
<div class="t" style="left:238.50px;top:641.19px;font-size:12.60px;font-weight:normal;color:#333;transform:scaleX(0.8600);">6.</div>
<div class="t" style="left:361.90px;top:641.19px;font-size:12.60px;font-weight:normal;color:#333;transform:scaleX(0.9000);">005</div>
<div class="t" style="left:488.40px;top:641.19px;font-size:12.60px;font-weight:normal;color:#333;transform:scaleX(0.8612);">MUZIA</div>
<div class="t" style="left:933.50px;top:641.19px;font-size:12.60px;font-weight:normal;color:#333;transform:scaleX(0.9554);">kasir</div>
<div class="t" style="left:238.50px;top:674.54px;font-size:12.60px;font-weight:normal;color:#333;transform:scaleX(0.8600);">7.</div>
<div class="t" style="left:361.90px;top:674.54px;font-size:12.60px;font-weight:normal;color:#333;transform:scaleX(0.9000);">006</div>
<div class="t" style="left:488.40px;top:674.54px;font-size:12.60px;font-weight:normal;color:#333;transform:scaleX(0.8453);">FITRIANI ANWAR</div>
<div class="t" style="left:933.50px;top:674.54px;font-size:12.60px;font-weight:normal;color:#333;transform:scaleX(0.9554);">kasir</div>
<div class="t" style="left:238.50px;top:707.89px;font-size:12.60px;font-weight:normal;color:#333;transform:scaleX(0.8600);">8.</div>
<div class="t" style="left:361.90px;top:707.89px;font-size:12.60px;font-weight:normal;color:#333;transform:scaleX(0.9000);">007</div>
<div class="t" style="left:488.40px;top:707.89px;font-size:12.60px;font-weight:normal;color:#333;transform:scaleX(0.8315);">MASNO</div>
<div class="t" style="left:933.50px;top:707.89px;font-size:12.60px;font-weight:normal;color:#333;transform:scaleX(0.9554);">kasir</div>
<div class="t" style="left:238.50px;top:741.24px;font-size:12.60px;font-weight:normal;color:#333;transform:scaleX(0.8600);">9.</div>
<div class="t" style="left:361.90px;top:741.24px;font-size:12.60px;font-weight:normal;color:#333;transform:scaleX(0.9000);">008</div>
<div class="t" style="left:488.40px;top:741.24px;font-size:12.60px;font-weight:normal;color:#333;transform:scaleX(0.7937);">YUDA</div>
<div class="t" style="left:933.50px;top:741.24px;font-size:12.60px;font-weight:normal;color:#333;transform:scaleX(0.9554);">kasir</div>
<div class="t" style="left:238.50px;top:774.59px;font-size:12.60px;font-weight:normal;color:#333;transform:scaleX(0.8600);">10.</div>
<div class="t" style="left:361.90px;top:774.59px;font-size:12.60px;font-weight:normal;color:#333;transform:scaleX(0.9000);">009</div>
<div class="t" style="left:488.40px;top:774.59px;font-size:12.60px;font-weight:normal;color:#333;transform:scaleX(0.8561);">JULINDRA</div>
<div class="t" style="left:933.50px;top:774.59px;font-size:12.60px;font-weight:normal;color:#333;transform:scaleX(0.9554);">kasir</div>
<div class="t" style="left:238.50px;top:807.94px;font-size:12.60px;font-weight:normal;color:#333;transform:scaleX(0.8600);">11.</div>
<div class="t" style="left:361.90px;top:807.94px;font-size:12.60px;font-weight:normal;color:#333;transform:scaleX(0.9000);">010</div>
<div class="t" style="left:488.40px;top:807.94px;font-size:12.60px;font-weight:normal;color:#333;transform:scaleX(0.8360);">FENNI</div>
<div class="t" style="left:933.50px;top:807.94px;font-size:12.60px;font-weight:normal;color:#333;transform:scaleX(0.9554);">kasir</div>
<div class="t" style="left:238.50px;top:841.29px;font-size:12.60px;font-weight:normal;color:#333;transform:scaleX(0.8600);">12.</div>
<div class="t" style="left:361.90px;top:841.29px;font-size:12.60px;font-weight:normal;color:#333;transform:scaleX(0.9000);">011</div>
<div class="t" style="left:488.40px;top:841.29px;font-size:12.60px;font-weight:normal;color:#333;transform:scaleX(0.8230);">SUHERI</div>
<div class="t" style="left:933.50px;top:841.29px;font-size:12.60px;font-weight:normal;color:#333;transform:scaleX(0.9554);">kasir</div>
<div class="r" style="left:207px;top:954px;width:1233px;height:46px;background:#fff;"></div>
<div class="r" style="left:207px;top:954px;width:1233px;height:1px;background:#d2d6de;"></div>
<div class="t" style="left:220.80px;top:972.10px;font-size:12.17px;font-weight:bold;color:#333;transform:scaleX(0.9502);-webkit-text-stroke:0;">Copyright © 2026 All rights reserved.</div>
<div class="t" style="left:1330.90px;top:972.10px;font-size:12.17px;font-weight:bold;color:#333;transform:scaleX(0.9636);-webkit-text-stroke:0;">Star Hotel -v1.6.5</div>
</body></html>
